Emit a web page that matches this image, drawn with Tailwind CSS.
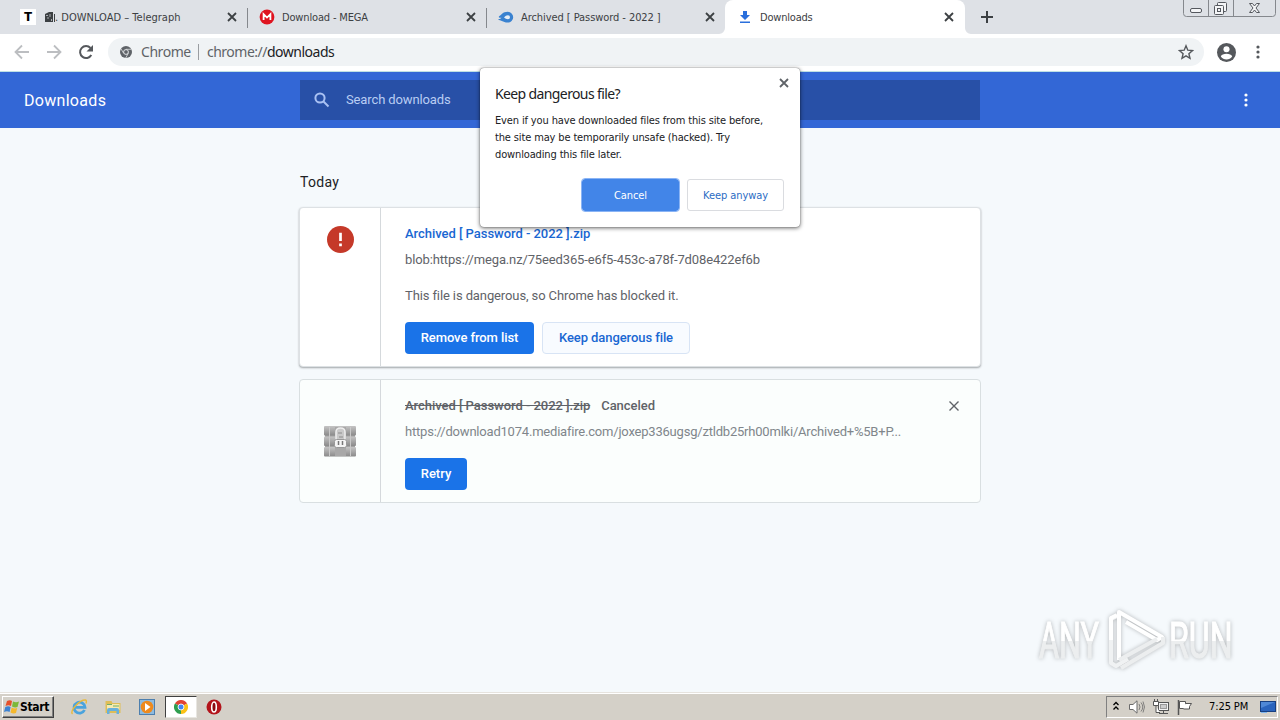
<!DOCTYPE html>
<html lang="en">
  <head>
    <meta charset="UTF-8" />
    <title>Downloads</title>
    <script src="https://cdn.jsdelivr.net/npm/@tailwindcss/browser@4"></script>
  </head>
  <body class="w-[1280px] h-[720px] overflow-hidden flex flex-col relative bg-[#f5f9fc] font-['Roboto',sans-serif] text-[13px] whitespace-nowrap">
    <svg class="hidden">
      <symbol id="close" viewBox="0 0 10 10">
        <path d="M1 1l8 8M9 1l-8 8" stroke="currentColor" stroke-width="1.8" fill="none" />
      </symbol>
      <symbol id="dots" viewBox="0 0 4 14">
        <circle cx="2" cy="2" r="1.6" /><circle cx="2" cy="7" r="1.6" /><circle cx="2" cy="12" r="1.6" />
      </symbol>
    </svg>

    <!-- Tab strip -->
    <div class="h-[34px] shrink-0 flex bg-[#dee1e6] pl-2 font-['DejaVu_Sans_Condensed','Noto_Sans',sans-serif] text-[11px] text-[#3c4043]">
      <div class="w-[239px] flex items-center pl-3 pr-[10px] relative">
        <span class="size-4 bg-white text-black font-['Roboto'] font-black text-[13px] leading-4 text-center">T</span>
        <svg class="w-[11px] h-3 ml-[9px]" viewBox="0 0 11 12">
          <path d="M0 3l4-2h4v10H0z" fill="#3c4043" /><path d="M1 4.500h2M5 3v3M2 7h2M6.500 8v2" stroke="#a9acb2" /><path d="M9.500 3v8" stroke="#3c4043" />
        </svg>
        <span class="flex-1 pt-0.5 -ml-px tracking-[0.01px]">. DOWNLOAD – Telegraph</span>
        <svg class="size-[10px]"><use href="#close" /></svg>
        <span class="absolute right-[-1px] top-2 w-px h-5 bg-[#85888d]"></span>
      </div>
      <div class="w-[239px] flex items-center pl-3 pr-[10px] relative">
        <svg class="size-4" viewBox="0 0 16 16">
          <circle cx="8" cy="8" r="7.4" fill="#df1420" />
          <path d="M4.6 11V5.2L8 8.6l3.4-3.4V11" fill="none" stroke="#fff" stroke-width="1.8" />
        </svg>
        <span class="flex-1 pt-0.5 ml-[7px] tracking-[-0.16px]">Download - MEGA</span>
        <svg class="size-[10px]"><use href="#close" /></svg>
        <span class="absolute right-[-1px] top-2 w-px h-5 bg-[#85888d]"></span>
      </div>
      <div class="w-[239px] flex items-center pl-3 pr-[10px]">
        <svg class="size-4" viewBox="0 0 16 16">
          <path d="M0 10c2 .3 2.500-.2 3.500-1.200H1.800c-1.300 0-1.300-1.200-.4-1.700C3.500 6 4.500 2.800 9.800 2.800a5.400 5.400 0 0 1 0 10.800c-3 0-4-1-6-1.700-1.500-.4-2.800-.6-3.800-1.900z" fill="#3a82d0" />
          <path d="M6 8.600c1-1 1.800-2.300 4-2.300a2 2 0 0 1 0 4c-1.700 0-2.500-.8-4-1.700z" fill="#e6eef7" />
        </svg>
        <span class="flex-1 pt-0.5 ml-[7px] tracking-[-0.07px]">Archived [ Password - 2022 ]</span>
        <svg class="size-[10px]"><use href="#close" /></svg>
      </div>
      <div class="w-[240px] flex items-center pl-3 pr-[11px] bg-white rounded-t-lg relative">
        <svg class="size-4" viewBox="0 0 16 16" fill="#2a6fdc">
          <path d="M6 2h4v4h3L8 11 3 6h3zM3 12.500h10V14H3z" />
        </svg>
        <span class="flex-1 pt-0.5 ml-[7px] tracking-[-0.2px]">Downloads</span>
        <svg class="size-[10px]"><use href="#close" /></svg>
        <svg class="absolute -left-[6px] bottom-0 size-[6px]" viewBox="0 0 6 6"><path d="M6 0v6H0a6 6 0 0 0 6-6z" fill="#fff" /></svg>
        <svg class="absolute -right-[6px] bottom-0 size-[6px]" viewBox="0 0 6 6"><path d="M0 0v6h6a6 6 0 0 1-6-6z" fill="#fff" /></svg>
      </div>
      <svg class="size-3 ml-4 mt-[11px]" viewBox="0 0 12 12"><path d="M6 0v12M0 6h12" stroke="#3c4043" stroke-width="2" /></svg>
      <!-- Window buttons -->
      <svg class="w-[93px] h-[17px] ml-auto mr-1" viewBox="0 0 93 17" fill="none" stroke="#85888d">
        <path d="M.5 0v13.500q0 3 3 3h86q3 0 3-3V0M25.500 0v16M50.500 0v16" />
        <g stroke="#55585e" fill="#f4f5f7">
          <rect x="7.500" y="8.500" width="11" height="4" rx="1.500" />
          <rect x="34.500" y="2.500" width="9" height="9" rx="1" />
          <rect x="31.500" y="5.500" width="9" height="9" rx="1" />
          <rect x="34.500" y="8.500" width="3" height="3" />
          <path d="M66.500 3.500h3l2 2.500 2-2.500h3l-3.500 4.500 3.500 4.500h-3l-2-2.500-2 2.500h-3L70 8z" />
        </g>
      </svg>
    </div>

    <!-- Toolbar -->
    <div class="h-[38px] shrink-0 flex items-center bg-white border-b border-[#bfe0e4] pl-[14px] pr-[20px] pb-px">
      <svg class="w-4 h-4" viewBox="0 0 16 16" fill="none" stroke="#bcbec1" stroke-width="1.800"><path d="M15 8H2M8 1.500L1.500 8 8 14.500" /></svg>
      <svg class="w-4 h-4 ml-4" viewBox="0 0 16 16" fill="none" stroke="#bcbec1" stroke-width="1.800"><path d="M1 8h13M8 1.500L14.500 8 8 14.500" /></svg>
      <svg class="w-4 h-4 ml-4" viewBox="0 0 16 16"><path d="M13.300 11A6 6 0 1 1 12.500 4" fill="none" stroke="#55585c" stroke-width="2" /><path d="M15 1v6.500H8.500z" fill="#55585c" /></svg>
      <div class="flex-1 h-7 ml-[14px] rounded-full bg-[#f0f3f5] flex items-center pl-3 pr-[10px] font-['Noto_Sans',sans-serif] text-sm text-[#5f6368]">
        <svg class="size-3" viewBox="0 0 12 12">
          <circle cx="6" cy="6" r="6" fill="#5f6368" />
          <path d="M6 3.300h5.300M3.700 7.300L1 2.800M8.300 7.300L5.700 12" stroke="#f0f3f5" stroke-width=".7" />
          <circle cx="6" cy="6" r="2.400" fill="#5f6368" stroke="#f0f3f5" stroke-width=".9" />
        </svg>
        <span class="ml-[9px] tracking-[-0.45px] w-[50px]">Chrome</span>
        <span class="w-px h-4 ml-[7px] bg-[#9a9da1]"></span>
        <span class="ml-2 flex-1 tracking-[-0.5px]">chrome://<span class="text-[#202124]">downloads</span></span>
        <svg class="size-4" viewBox="0 0 16 16" fill="none" stroke="#55585c" stroke-width="1.400"><path d="M8 1.800l1.800 4.400 4.700.4-3.600 3.100 1.100 4.600L8 11.900l-4 2.400 1.100-4.600L1.500 6.600l4.700-.4z" /></svg>
      </div>
      <svg class="size-[19px] ml-[13px]" viewBox="0 0 20 20"><circle cx="10" cy="10" r="10" fill="#55585c" /><circle cx="10" cy="6.500" r="3.200" fill="#fff" /><path d="M4 14.300c1-4 11-4 12 0a7.300 7.300 0 0 1-12 0z" fill="#fff" /></svg>
      <svg class="w-1 h-[14px] ml-5 text-[#55585c]" fill="currentColor"><use href="#dots" /></svg>
    </div>

    <!-- Page header -->
    <header class="h-14 shrink-0 bg-[#3367d6] flex items-center pl-6 pr-8 text-white">
      <h1 class="w-[276px] pt-0.5 text-base tracking-[0.3px]">Downloads</h1>
      <div class="w-[680px] h-10 bg-[#2850a7] flex items-center pl-[14px] text-[#b9cdf3]">
        <svg class="size-4" viewBox="0 0 16 16" fill="none" stroke="#a9c1f3" stroke-width="2"><circle cx="6" cy="6" r="4.600" /><path d="M9.500 9.500l5 5" /></svg>
        <span class="ml-4 tracking-[-0.12px]">Search downloads</span>
      </div>
      <svg class="w-1 h-[14px] ml-auto" fill="#fff"><use href="#dots" /></svg>
    </header>

    <main class="flex-1 w-[682px] ml-[299px] pt-[44px] text-[#5f6368]">
      <h2 class="h-[35px] pl-px leading-[20px] text-sm tracking-[0.3px] text-[#202124]">Today</h2>

      <div class="h-[160px] flex bg-white rounded border border-[#dde1e4] shadow-[0_1px_2px_rgba(60,64,67,0.45)]">
        <div class="w-[81px] border-r border-[#d5d9dc] flex justify-center pt-[18px]">
          <svg class="size-[27px]" viewBox="0 0 26 26"><circle cx="13" cy="13" r="13" fill="#c53929" /><path d="M13 6.500v8M13 16.800v2.700" stroke="#fff" stroke-width="2.600" /></svg>
        </div>
        <div class="pl-6 pt-4 flex flex-col leading-5">
          <a class="font-medium tracking-[-0.04px] text-[#1967d2]">Archived [ Password - 2022 ].zip</a>
          <span class="mt-[6px] tracking-[-0.135px]">blob:https://mega.nz/75eed365-e6f5-453c-a78f-7d08e422ef6b</span>
          <span class="mt-4 tracking-[-0.11px]">This file is dangerous, so Chrome has blocked it.</span>
          <div class="flex gap-2 mt-4 font-medium tracking-[-0.08px]">
            <button class="w-[129px] h-8 rounded bg-[#1a73e8] text-white">Remove from list</button>
            <button class="w-[148px] h-8 rounded bg-[#f8fbff] border border-[#d8e4f5] text-[#1967d2]">Keep dangerous file</button>
          </div>
        </div>
      </div>

      <div class="mt-3 h-[124px] flex bg-[#fbfefd] rounded border border-[#d9dfe1]">
        <div class="w-[81px] border-r border-[#d5d9dc] flex items-center justify-center">
          <!-- Archive icon -->
          <svg class="w-8 h-[31px]" viewBox="0 0 32 31">
            <defs>
              <linearGradient id="book" x1="0" y1="0" x2="0" y2="1">
                <stop offset="0" stop-color="#c4c4c4" /><stop offset="1" stop-color="#8a8a8a" />
              </linearGradient>
            </defs>
            <path d="M1 1h30v29H1z" fill="#a3a3a3" />
            <g fill="url(#book)">
              <rect width="32" height="9.500" rx="1" /><rect y="10.500" width="32" height="9.500" rx="1" /><rect y="21" width="32" height="9.500" rx="1" />
            </g>
            <path d="M5.500 1v29M26.500 1v29" stroke="#c9c9c9" />
            <path d="M11 1h11v29H11z" fill="#a8a8a8" />
            <path d="M12 14V6q0-4 4.500-4T21 6v8" fill="#c9c9c9" stroke="#eee" stroke-width="1.500" />
            <path d="M14 7h4M15 11h4" stroke="#8d8d8d" />
            <rect x="10.500" y="13.500" width="12" height="8" rx="2" fill="#f4f4f4" stroke="#999" />
            <path d="M14.500 15v4M18.500 15v4" stroke="#777" stroke-width="1.500" />
          </svg>
        </div>
        <div class="pl-6 pt-4 flex-1 flex flex-col leading-5">
          <div class="flex gap-[11px] font-medium tracking-[-0.04px]">
            <span class="line-through">Archived [ Password - 2022 ].zip</span>
            <span>Canceled</span>
          </div>
          <span class="mt-[6px] tracking-[-0.205px] text-[#80868b]">https://download1074.mediafire.com/joxep336ugsg/ztldb25rh00mlki/Archived+%5B+P...</span>
          <button class="w-[62px] h-8 mt-4 rounded bg-[#1a73e8] text-white font-medium">Retry</button>
        </div>
        <svg class="size-[10px] mt-[21px] mr-[21px]" viewBox="0 0 10 10"><path d="M.5.500l9 9M9.500.500l-9 9" stroke="#5f6368" stroke-width="1.400" /></svg>
      </div>
    </main>

    <!-- Watermark -->
    <div class="absolute left-[1030px] top-[608px] w-[215px] h-[68px]">
      <svg class="w-full h-full drop-shadow-[0_0_2px_rgba(0,0,0,0.27)]" viewBox="-7 0 215 68">
        <defs>
          <linearGradient id="fade" x1="0" y1="0" x2="0" y2="1">
            <stop offset=".5" stop-color="#fff" /><stop offset=".5" stop-color="#eceeef" />
          </linearGradient>
        </defs>
        <g fill="url(#fade)" stroke="url(#fade)" stroke-width=".5" font-family="Roboto" font-size="24">
          <text transform="translate(2 50) scale(1.280 2.050)">ANY</text>
          <text transform="translate(132 50) scale(1.340 2.050)">RUN</text>
        </g>
        <g fill="none" stroke-width="4" stroke-linejoin="round">
          <path d="M80 8l-6 3v44l5 3 12-7" stroke="#f0f2f3" />
          <path d="M80 7l-6 3v22" stroke="#fff" />
          <path d="M82 52V4l43 25-5 3-31-18" stroke="#fff" />
          <path d="M82 52l38-21M84 60l42-25v-6" stroke="#eceeef" />
        </g>
      </svg>
    </div>

    <!-- Dialog -->
    <div class="absolute left-[480px] top-[68px] w-[320px] h-[159px] bg-white rounded-sm shadow-[0_1px_4px_rgba(0,0,0,0.6),0_0_1px_rgba(0,0,0,0.6)] flex flex-col px-[15px] pt-[15px] text-[#202124] font-['DejaVu_Sans_Condensed','Noto_Sans',sans-serif]">
      <svg class="absolute right-[11px] top-[10px] size-[10px] text-[#5f6368]"><use href="#close" /></svg>
      <h3 class="text-[14px] leading-[22px] tracking-[-0.62px] font-['Noto_Sans']">Keep dangerous file?</h3>
      <p class="mt-[7px] text-[11px] leading-[17px] tracking-[-0.14px]">Even if you have downloaded files from this site before,<br />the site may be temporarily unsafe (hacked). Try<br />downloading this file later.</p>
      <div class="flex justify-end gap-2 mt-4 pr-px text-[11px] tracking-[-0.08px]">
        <button class="w-[97px] h-8 pt-0.5 rounded-[3px] bg-[#4285e8] text-white outline outline-[#8ab4f5]">Cancel</button>
        <button class="w-[97px] h-8 pt-0.5 rounded-[3px] border border-[#dadce0] text-[#2b6cc4]">Keep anyway</button>
      </div>
    </div>

    <!-- Taskbar -->
    <footer class="h-7 shrink-0 flex items-center bg-[#d4d0c8] border-t border-[#e6e3de] shadow-[inset_0_1px_0_#fff] pl-[2px] pr-[2px] pt-px font-['DejaVu_Sans_Condensed','Noto_Sans',sans-serif] text-[11px] text-black">
      <button class="w-[52px] h-[22px] flex items-center pl-px border border-t-white border-l-white border-r-[#404040] border-b-[#404040] shadow-[inset_-1px_-1px_0_#808080] font-bold text-xs tracking-[-0.3px]">
        <svg class="w-4 h-4 shrink-0" viewBox="0 0 16 16">
          <path d="M3 2q3-1.500 5 0L7 7Q4.500 5.500 1.500 7z" fill="#e5502b" /><path d="M9 2.500q3 1.500 6 0L13.500 8Q11 9 8 7.500z" fill="#7cb83a" />
          <path d="M1.300 8q3-1.300 5.300 0l-1 5Q3 11.500 0 13z" fill="#3c82d2" /><path d="M7.700 8.500q2.800 1.500 5.500.5L12 14q-2.500 1-5.500-.5z" fill="#f5b82c" />
        </svg>
        <span>Start</span>
      </button>
      <svg class="size-[18px] ml-4" viewBox="0 0 18 18"><path d="M14.500 12a5.500 5.500 0 1 1 .5-2.700H5" fill="none" stroke="#4aa3dd" stroke-width="2.800" /><path d="M2.500 16C-1 13 10 1.500 15.500 2q1.500.5.500 3.500" fill="none" stroke="#e9b93b" stroke-width="1.400" /></svg>
      <svg class="size-[18px] ml-4" viewBox="0 0 18 18"><path d="M1.500 3h6l1 2h8v10h-15z" fill="#dfbd57" /><path d="M3 6h12.500v6H3z" fill="#f7eab0" /><path d="M3 6.500h5M9 8h6" stroke="#6fae6a" /><path d="M3 16v-4q0-2 2-2h8q2 0 2 2v4h-2.500v-3h-7v3z" fill="#68b0dc" /></svg>
      <svg class="size-[16px] ml-[17px]" viewBox="0 0 16 16"><rect x=".5" y=".5" width="15" height="15" fill="#8dbbe0" stroke="#4d7fae" /><circle cx="8" cy="8" r="6.300" fill="#ee8a1d" /><path d="M6 4l5.500 4L6 12z" fill="#fff" /></svg>
      <div class="w-8 h-[22px] ml-[10px] bg-white border border-t-[#404040] border-l-[#404040] border-r-[#e8e6e1] border-b-[#e8e6e1] flex items-center justify-center">
        <svg class="size-[14px]" viewBox="0 0 16 16">
          <path d="M8 8L1.070 4A8 8 0 0 1 14.930 4z" fill="#e24334" /><path d="M8 8l6.930-4A8 8 0 0 1 8 16z" fill="#fbc116" /><path d="M8 8v8A8 8 0 0 1 1.070 4z" fill="#2f9e4f" />
          <circle cx="8" cy="8" r="3.400" fill="#4285f4" stroke="#fff" />
        </svg>
      </div>
      <svg class="size-4 ml-[9px]" viewBox="0 0 16 16"><circle cx="8" cy="8" r="7.500" fill="#b3141b" /><ellipse cx="8" cy="8" rx="2.300" ry="5" fill="#8a0a10" stroke="#fff" stroke-width="1.600" /></svg>

      <div class="ml-auto w-[172px] h-[22px] flex items-center border border-t-[#808080] border-l-[#808080] border-r-white border-b-white pl-[6px]">
        <svg class="w-[6px] h-[10px] mb-0.5" viewBox="0 0 6 10" fill="none" stroke="#000" stroke-width="1.300"><path d="M.5 4L3 1.500 5.500 4M.5 8.500L3 6l2.500 2.500" /></svg>
        <svg class="w-4 h-[14px] ml-[10px]" viewBox="0 0 16 14" fill="#fff" stroke="#6b6b6b"><path d="M.5 4.500H4L8 .8v12.400L4 9.500H.5z" /><path d="M10 4q2 3 0 6M12 2.500q3.500 4.500 0 9M14 1.500q3 5.500 0 11" fill="none" stroke-width=".8" /></svg>
        <svg class="w-4 h-4 ml-2" viewBox="0 0 16 16" fill="#f2f2f2" stroke="#555"><rect x="5.500" y="3.500" width="10" height="8" /><rect x="7.500" y="5.500" width="6" height="4" fill="#ccc" stroke="#999" /><path d="M6 14.500h9M10.500 12v2" /><path d="M.5 2.500h5v4h-5zM1.500 0v2M4.500 0v2M3 7v6.500h4" fill="#fff" /></svg>
        <svg class="w-4 h-4 ml-2" viewBox="0 0 16 16" fill="#fff" stroke="#555"><path d="M1.500 1v15" stroke-width="1.500" /><path d="M2.500 2.500h6v7h-6z" /><path d="M8.500 4.500h6l-2 3 0 2.500H6.500" /></svg>
        <span class="ml-4 pt-px tracking-[-0.1px]">7:25 PM</span>
        <svg class="w-4 h-[14px] ml-auto mr-px" viewBox="0 0 16 14"><rect x=".5" y="1.500" width="15" height="10" fill="#2a64bd" stroke="#173f80" /><path d="M1 2h14L1 8z" fill="#4f88d6" /><path d="M1 12.500h6" stroke="#7fb5ee" /></svg>
      </div>
    </footer>
  </body>
</html>
